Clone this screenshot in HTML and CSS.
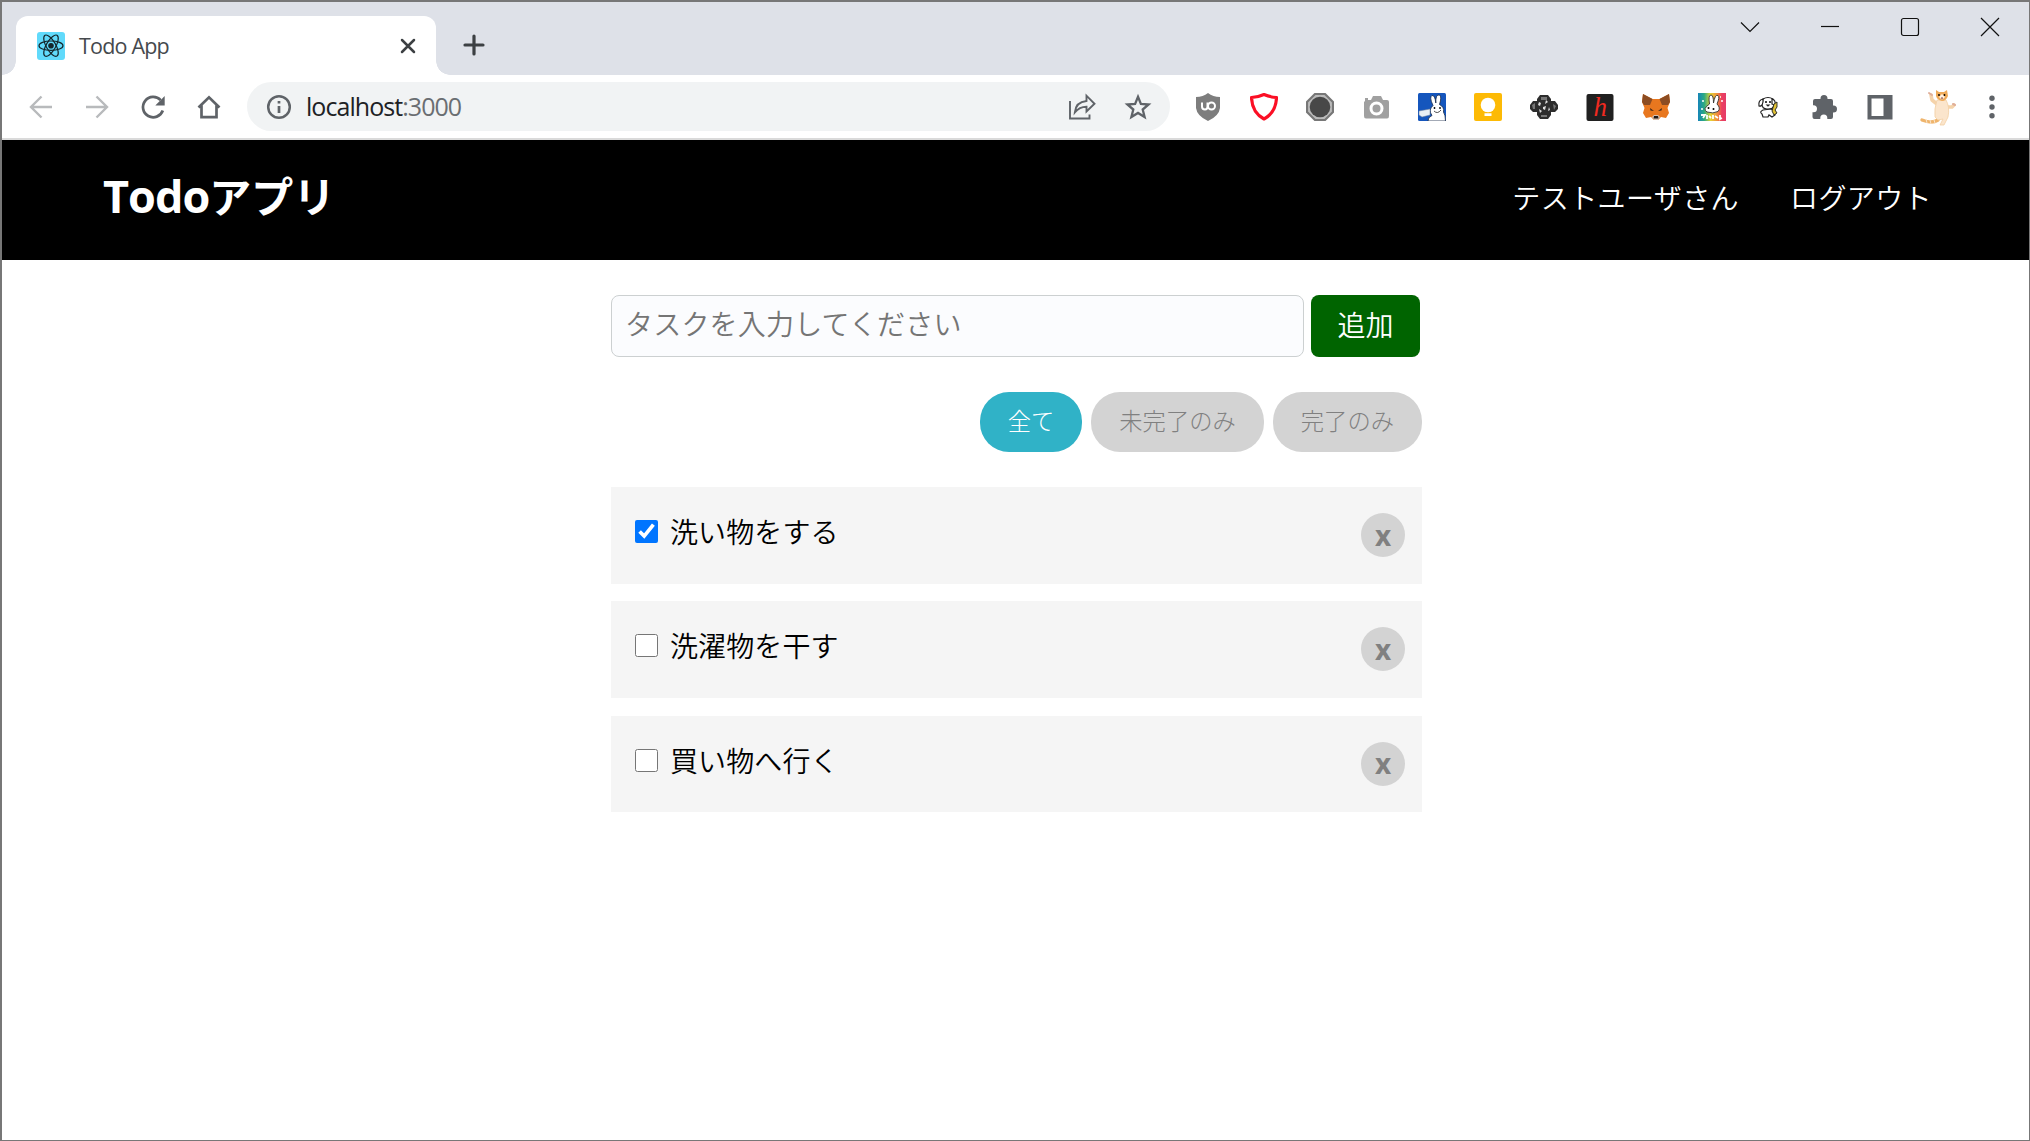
FILE: index.html
```html
<!DOCTYPE html>
<html lang="ja">
	<head>
		<meta charset="UTF-8">
		<meta name="viewport" content="width=device-width, initial-scale=1.0">
		<title>Todo App</title>
		<link rel="stylesheet" href="styles.css">
	</head>
	<body>
		<div class="window">

			<!-- タブバー -->
			<div class="tabbar">
				<div class="tab">
					<svg class="favicon" viewBox="0 0 28 28" fill="none" stroke="#15262b" stroke-width="1.2">
						<rect width="28" height="28" rx="3" fill="#61dafb" stroke="none"/>
						<ellipse cx="14" cy="13.7" rx="12" ry="4.7"/>
						<ellipse cx="14" cy="13.7" rx="12" ry="4.7" transform="rotate(60 14 13.7)"/>
						<ellipse cx="14" cy="13.7" rx="12" ry="4.7" transform="rotate(120 14 13.7)"/>
						<circle cx="14" cy="13.7" r="2.2" fill="#15262b"/>
					</svg>
					<span class="tab-title">Todo App</span>
					<svg class="tab-close" viewBox="0 0 16 16" stroke="#3c4043" stroke-width="2.5" stroke-linecap="round"><path d="M2 2L14 14M14 2L2 14"/></svg>
				</div>
				<svg class="tab-new" viewBox="0 0 22 22" stroke="#3c4043" stroke-width="3.2" stroke-linecap="round"><path d="M11 2V20M2 11H20"/></svg>
				<div class="win-btns">
					<svg viewBox="0 0 20 20"><path d="M1 5.5L10 14.5L19 5.5"/></svg>
					<svg viewBox="0 0 20 20"><path d="M1 9.5H19"/></svg>
					<svg viewBox="0 0 20 20"><rect x="1.5" y="1.5" width="17" height="17" rx="2"/></svg>
					<svg viewBox="0 0 20 20"><path d="M1 1L19 19M19 1L1 19"/></svg>
				</div>
			</div>

			<!-- ツールバー -->
			<div class="toolbar">
				<div class="nav">
					<svg viewBox="0 0 28 28" stroke="#b8babc"><path d="M25 14H4M14.5 3.5L4 14L14.5 24.5"/></svg>
					<svg viewBox="0 0 28 28" stroke="#b8babc"><path d="M3 14H24M13.500 3.500L24 14L13.500 24.500"/></svg>
					<svg viewBox="0 0 28 28" stroke="#5f6368"><path d="M21.700 7.200A10.200 10.200 0 1 0 23.800 17.500" stroke-width="2.7"/><path d="M25.700 3V12.600H16.300Z" fill="#5f6368" stroke="none"/></svg>
					<svg viewBox="0 0 28 28" stroke="#5f6368"><path d="M3.500 14.500L14 4.300L24.500 14.500M6.500 12.500V24.200H21.500V12.500" stroke-width="2.700"/></svg>
				</div>
				<div class="omnibox">
					<svg class="info" viewBox="0 0 26 26" fill="none" stroke="#5f6368"><circle cx="13" cy="13" r="10.800" stroke-width="2.500"/><path d="M13 12V19M13 7V9.600" stroke-width="2.700"/></svg>
					<p class="url">localhost<span>:3000</span></p>
					<svg class="share" viewBox="0 0 28 28" fill="none" stroke="#5f6368" stroke-width="1.900"><path d="M2 8V25.500H21.500V21.500"/><path d="M6.800 19.500C7.500 12 12.500 8.500 18.500 8V2.700L26.500 10.800L18.500 18.500V13.800C13.500 13.800 10 15.500 6.800 19.500Z"/></svg>
					<svg class="star" viewBox="0 0 28 28" fill="none" stroke="#5f6368" stroke-width="2.300"><path d="M14 3.800L16.900 10.900L24.600 11.500L18.700 16.500L20.600 24L14 19.900L7.400 24L9.300 16.500L3.400 11.500L11.100 10.900Z"/></svg>
				</div>
				<div class="exts">
					<svg viewBox="0 0 28 28"><path d="M14 0Q19 4 26 4V15Q25 23 14 28Q3 23 2 15V4Q9 4 14 0Z" fill="#7d7d7d"/><path d="M8 9.500V13.500Q8 16.500 11 16.500Q13.500 16.500 13.500 13.500V9.500" fill="none" stroke="#fff" stroke-width="2"/><circle cx="17.500" cy="13" r="3.500" fill="none" stroke="#fff" stroke-width="2"/></svg>
					<svg viewBox="0 0 28 28"><path d="M14 1.500Q19.500 4 26.500 4.500Q26 19.500 14 26Q2 19.500 1.500 4.500Q8.500 4 14 1.500Z" fill="none" stroke="#fb0f25" stroke-width="3.200" stroke-linejoin="round"/></svg>
					<svg viewBox="0 0 28 28"><path d="M9 1H19L27 9V19L19 27H9L1 19V9Z" fill="#bbb" stroke="#777" stroke-width="2.200" stroke-linejoin="round"/><circle cx="14" cy="14" r="10.300" fill="#484848"/></svg>
					<svg viewBox="0 0 28 28"><path d="M3 8V5H6V7H9L11 3H19L21 7H25Q27 7 27 9V23Q27 25.500 25 25.500H4Q2 25.500 2 23V9Z" fill="#a0a0a0"/><circle cx="14.500" cy="15.500" r="5.500" fill="#a0a0a0" stroke="#fff" stroke-width="3"/></svg>
					<svg viewBox="0 0 28 28">
						<rect width="28" height="28" rx="1.500" fill="#1556bd"/>
						<path d="M15 12.500Q11 4 14 2.500Q17 2 17.800 10Q17.500 1 21.500 2Q24 3.500 21.500 11.500Q26.500 14 25.500 19Q27.500 22 27.500 28H10Q10 24 14 22.500Q10 17 15 12.500Z" fill="#fff" stroke="#172846" stroke-width=".8"/>
						<path d="M1 18L12 16V22L4 24L1 22Z" fill="#e9eff5" stroke="#6c7f9b" stroke-width=".5"/>
						<path d="M16 18Q19.500 21.500 23 17" fill="none" stroke="#222" stroke-width=".8"/>
						<circle cx="16.500" cy="15" r=".9"/><circle cx="22" cy="15" r=".9"/>
					</svg>
					<svg viewBox="0 0 28 28"><rect width="28" height="28" rx="2" fill="#fdba05"/><circle cx="14" cy="12" r="7.300" fill="#fff"/><path d="M10.500 16H17.500V18.500H10.500ZM10.500 20.300H17.500V23H10.500Z" fill="#fff"/></svg>
					<svg viewBox="0 0 28 28">
						<path d="M10 2H18L21 6V8H25L28 12V16L25 19H21V22L18 26H10L7 22V19H3L0 16V12L3 8H7V6Z" fill="#2d2d2d"/>
						<path d="M11 4H17V7H11ZM2 12L5 10V16H3ZM23 11L26 13L24 17ZM11 22H17V24H11Z" fill="#777"/>
						<path d="M9 9L11 10L10 13L8 12ZM16 7L18 9L15 11ZM13 14L16 13L15 17L13 16ZM19 14L20 17L18 18ZM9 16L12 18L10 20Z" fill="#ddd"/>
					</svg>
					<svg viewBox="0 0 28 28"><rect x=".5" y="1" width="27" height="27" rx="2" fill="#202020"/><text class="ext-h" x="7.500" y="22.500">h</text></svg>
					<svg viewBox="0 0 28 28">
						<path d="M1 1L10.500 6H17.500L27 1L28 9L25.500 15L27 20L24 25L19 24L16 27H12L9 24L4 25L1 20L2.500 15L0 9Z" fill="#e8771f"/>
						<path d="M1 1L10.500 6L8 12L2 12L0 9ZM27 1L17.500 6L20 12L26 12L28 9Z" fill="#8c4c22"/>
						<path d="M8 15L12 18L8.500 17.500ZM20 15L16 18L19.500 17.500Z" fill="#3c261b"/>
						<path d="M10 24L12 22H16L18 24L16 27H12Z" fill="#d6c0b3"/><path d="M12 23H16L16.500 25.500H11.500Z" fill="#211a18"/>
					</svg>
					<svg viewBox="0 0 28 28">
						<defs><linearGradient id="rainbow"><stop offset="0" stop-color="#1684b9"/><stop offset=".22" stop-color="#2aaa83"/><stop offset=".45" stop-color="#e6d334"/><stop offset=".7" stop-color="#f18a3c"/><stop offset=".85" stop-color="#eb3f60"/><stop offset="1" stop-color="#e43c69"/></linearGradient></defs>
						<rect width="28" height="28" fill="url(#rainbow)"/>
						<path d="M11.500 11Q10 2 13 2Q15.500 2 15.500 10Q17 1 20 2.500Q22 4 19 11Q23 15 20 18.500Q15 21 9 19Q4 16 11.500 11Z" fill="#fff" stroke="#333" stroke-width=".9"/>
						<circle cx="10.500" cy="15" r="1"/><circle cx="15.500" cy="16" r="1"/>
						<path d="M4 8H6M23 8H25M3 16H5M22 4H23" stroke="#fff" stroke-width="1.500"/>
						<path d="M3 22H7L5 25M9 22V26M11 23L13 25M15 22V26M17 23L20 25M22 22V26L24 25" fill="none" stroke="#fff" stroke-width="1.800"/>
					</svg>
					<svg viewBox="0 0 28 28" stroke="#222" stroke-width="1.200" fill="#fff">
						<path d="M9 6Q14 3 19 6L20 13Q18 17 13 16Q8 16 8 11Z"/><path d="M9 6Q4 7 5 13Q8 14 9 9ZM18 6Q22 7 21 12L18 11Z"/>
						<path d="M9 17Q5 19 8 21L9 24H14L15 22L18 24L21 22V18L17 16Z"/>
						<path d="M20 11L23 9V14L21 17L23 20L20 22L18 18Z" fill="#e1c233" stroke-width=".9"/>
						<circle cx="12" cy="9" r=".5" fill="#222"/><circle cx="16" cy="9" r=".5" fill="#222"/><path d="M13 12H15L14 13Z" fill="#222"/>
					</svg>
					<svg viewBox="0 0 28 28"><path d="M10.500 6V5.500A3.500 3.500 0 0 1 17.500 5.500V6H21Q23 6 23 8V12.500H23.500A3.500 3.500 0 0 1 23.500 19.500H23V24Q23 26 21 26H17.300V25A3.500 3.500 0 0 0 10.300 25V26H4.500Q2.500 26 2.500 24V19.300H3.500A3.500 3.500 0 0 0 3.500 12.300H3V8Q3 6 5 6Z" fill="#5f6368"/></svg>
					<svg viewBox="0 0 28 28"><path d="M1.500 2H26.500V26.500H1.500ZM5.500 5.500V23H17.500V5.500Z" fill="#5f6368" fill-rule="evenodd"/></svg>
					<svg class="avatar" viewBox="0 0 40 40">
						<path d="M19 33Q13 37 3 33" fill="none" stroke="#efb56d" stroke-width="3.400" stroke-linecap="round"/>
						<path d="M7 32L8 36M11 33L12 37M15 33L16 36" stroke="#fbe5cc" stroke-width="1"/>
						<path d="M18 17L13 13L12 8M28 20L33 20L35 18" fill="none" stroke="#f5d3aa" stroke-width="3.600" stroke-linecap="round" stroke-linejoin="round"/>
						<path d="M18 13Q15 22 16 30L19 33L24 32L21 38H25L29 30Q31 20 27 13Z" fill="#fbe5cc" stroke="#f2cfa3" stroke-width=".8"/>
						<path d="M17 3L20 5H25L28 3L29 9Q27 14 23 14Q18 13 17 9Z" fill="#efaa58"/><path d="M20 10L23 7L26 10L23 13Z" fill="#fff0df"/>
						<circle cx="20" cy="8" r=".9"/><circle cx="25.500" cy="8" r=".9"/><path d="M22 10.500H24L23 13Z" fill="#873d2c"/>
						<path d="M10 6L13 8M34 17L36 18" stroke="#dfae9a" stroke-width="2" stroke-linecap="round"/>
					</svg>
					<svg class="more" viewBox="0 0 28 28" fill="#5f6368"><circle cx="14" cy="5.200" r="2.700"/><circle cx="14" cy="14" r="2.700"/><circle cx="14" cy="22.700" r="2.700"/></svg>
				</div>
			</div>

			<!-- ヘッダー -->
			<header class="header">
				<h1 class="logo"><span>Todo</span>アプリ</h1>
				<ul class="menu">
					<li>テストユーザさん</li>
					<li>ログアウト</li>
				</ul>
			</header>

			<main class="container">
				<form class="task-form">
					<input class="task-input" type="text" placeholder="タスクを入力してください">
					<button class="task-add" type="button">追加</button>
				</form>

				<div class="filters">
					<button class="filter act">全て</button>
					<button class="filter">未完了のみ</button>
					<button class="filter">完了のみ</button>
				</div>

				<ul class="todos">
					<li class="todo">
						<label><input type="checkbox" checked>洗い物をする</label>
						<button class="todo-del">x</button>
					</li>
					<li class="todo">
						<label><input type="checkbox">洗濯物を干す</label>
						<button class="todo-del">x</button>
					</li>
					<li class="todo">
						<label><input type="checkbox">買い物へ行く</label>
						<button class="todo-del">x</button>
					</li>
				</ul>
			</main>

		</div>
	</body>
</html>
```
FILE: styles.css
```css
*{
	margin: 0;
	padding: 0;
	box-sizing: border-box;
}
body{
	font-family: "Noto Sans CJK JP", sans-serif;
	font-size: 28px;
	font-weight: 350;
	color: #000;
}
ul{
	list-style: none;
}
button{
	border: none;
	font-family: inherit;
	font-weight: inherit;
}
svg{
	display: block;
	flex-shrink: 0;
}
.window{
	height: 1141px;
	border: 2px solid #777;
	border-right-width: 1px;
	border-bottom-width: 1px;
	background-color: #fff;
	overflow: hidden;
}

/* タブバー */
.tabbar{
	display: flex;
	height: 73px;
	padding: 14px 0 0 14px;
	background-color: #dee1e8;
}
.tab{
	position: relative;
	display: flex;
	align-items: center;
	width: 420px;
	height: 59px;
	padding: 0 20px 0 21px;
	background-color: #fff;
	border-radius: 12px 12px 0 0;
}
/* タブ下の丸み */
.tab::before,
.tab::after{
	content: "";
	position: absolute;
	bottom: 0;
	width: 14px;
	height: 14px;
}
.tab::before{
	left: -14px;
	background: radial-gradient(circle at 0 0, #dee1e8 13.500px, #fff 14px);
}
.tab::after{
	right: -14px;
	background: radial-gradient(circle at 100% 0, #dee1e8 13.500px, #fff 14px);
}
.favicon{
	width: 28px;
	height: 28px;
}
.tab-title{
	flex: 1;
	margin-left: 14px;
	font-family: "Open Sans", sans-serif;
	font-size: 21.500px;
	font-weight: 400;
	letter-spacing: -.8px;
	color: #45494d;
}
.tab-close{
	width: 16px;
	height: 16px;
}
.tab-new{
	width: 22px;
	height: 22px;
	margin: 18px 0 0 27px;
}
.win-btns{
	display: flex;
	gap: 60px;
	margin: 1px 29.500px 0 auto;
}
.win-btns svg{
	width: 20px;
	height: 20px;
	fill: none;
	stroke: #111;
	stroke-width: 1.200;
}

/* ツールバー */
.toolbar{
	display: flex;
	align-items: center;
	height: 65px;
	border-bottom: 2px solid #dadada;
}
.nav{
	display: flex;
	gap: 28px;
	margin-left: 24.500px;
}
.nav svg{
	width: 28px;
	height: 28px;
	fill: none;
	stroke-width: 2.400;
}
.omnibox{
	display: flex;
	align-items: center;
	width: 923px;
	height: 49px;
	margin-left: 24.500px;
	padding: 0 18px 0 19px;
	border-radius: 25px;
	background-color: #f1f3f4;
}
.info{
	width: 26px;
	height: 26px;
}
.url{
	flex: 1;
	margin-left: 14px;
	padding-bottom: 1px;
	font-family: "Open Sans", sans-serif;
	font-size: 25px;
	font-weight: 400;
	line-height: 47px;
	letter-spacing: -.95px;
	color: #202124;
}
.url span{
	color: #6a6e72;
}
.share,
.star{
	width: 28px;
	height: 28px;
}
.star{
	margin-left: 28px;
}
.exts{
	display: flex;
	align-items: center;
	gap: 28px;
	margin-left: 23.500px;
}
.exts svg{
	width: 28px;
	height: 28px;
}
.exts .avatar{
	width: 40px;
	height: 40px;
	margin-left: -3px;
}
.exts .more{
	margin-left: -8.500px;
}
.ext-h{
	font-family: "Liberation Serif", serif;
	font-size: 27px;
	font-style: italic;
	fill: #f02a20;
}

/* ヘッダー */
.header{
	display: flex;
	justify-content: space-between;
	height: 120px;
	padding: 0 97px 0 101px;
	color: #fff;
	background-color: #000;
}
.logo{
	font-size: 42px;
	line-height: 110px;
}
.logo span{
	font-family: "Open Sans", sans-serif;
	font-size: 45px;
	letter-spacing: -1px;
}
.menu{
	display: flex;
	gap: 51px;
	line-height: 114px;
	letter-spacing: .4px;
}

/* タスク */
.container{
	width: 811px;
	margin: 35px 0 0 609px;
}
.task-form{
	display: flex;
	gap: 7px;
	height: 62px;
}
.task-input{
	width: 693px;
	padding: 0 14px 6px 13px;
	border: 1px solid #ccd0d1;
	border-radius: 8px;
	background-color: #fbfcfe;
	font-family: inherit;
	font-size: 28px;
	font-weight: inherit;
	letter-spacing: .2px;
}
.task-input::placeholder{
	color: #757575;
}
.task-add{
	width: 109px;
	padding-bottom: 5px;
	border-radius: 8px;
	font-size: 28px;
	color: #fff;
	background-color: #006400;
}

.filters{
	display: flex;
	justify-content: flex-end;
	gap: 9px;
	margin: 35px 0;
}
.filter{
	height: 60px;
	padding: 0 28px 4px;
	border-radius: 29px;
	font-size: 23.300px;
	font-weight: 300;
	color: #808080;
	background-color: #d3d3d3;
}
.filter.act{
	color: #fff;
	background-color: #30b2c7;
}

.todo{
	display: flex;
	justify-content: space-between;
	height: 96.700px;
	margin-bottom: 17.700px;
	padding: 25px 17px 0 24px;
	background-color: #f5f5f5;
}
.todo label{
	display: flex;
	height: 38px;
	align-items: center;
	letter-spacing: .1px;
}
.todo input{
	width: 23px;
	height: 23px;
	margin: 1px 12px 0 0;
}
.todo-del{
	width: 44px;
	height: 44px;
	margin-top: 1px;
	border-radius: 50%;
	font-family: "Open Sans", sans-serif;
	font-size: 28px;
	font-weight: bold;
	line-height: 43px;
	color: #808080;
	background-color: #d3d3d3;
}
```
